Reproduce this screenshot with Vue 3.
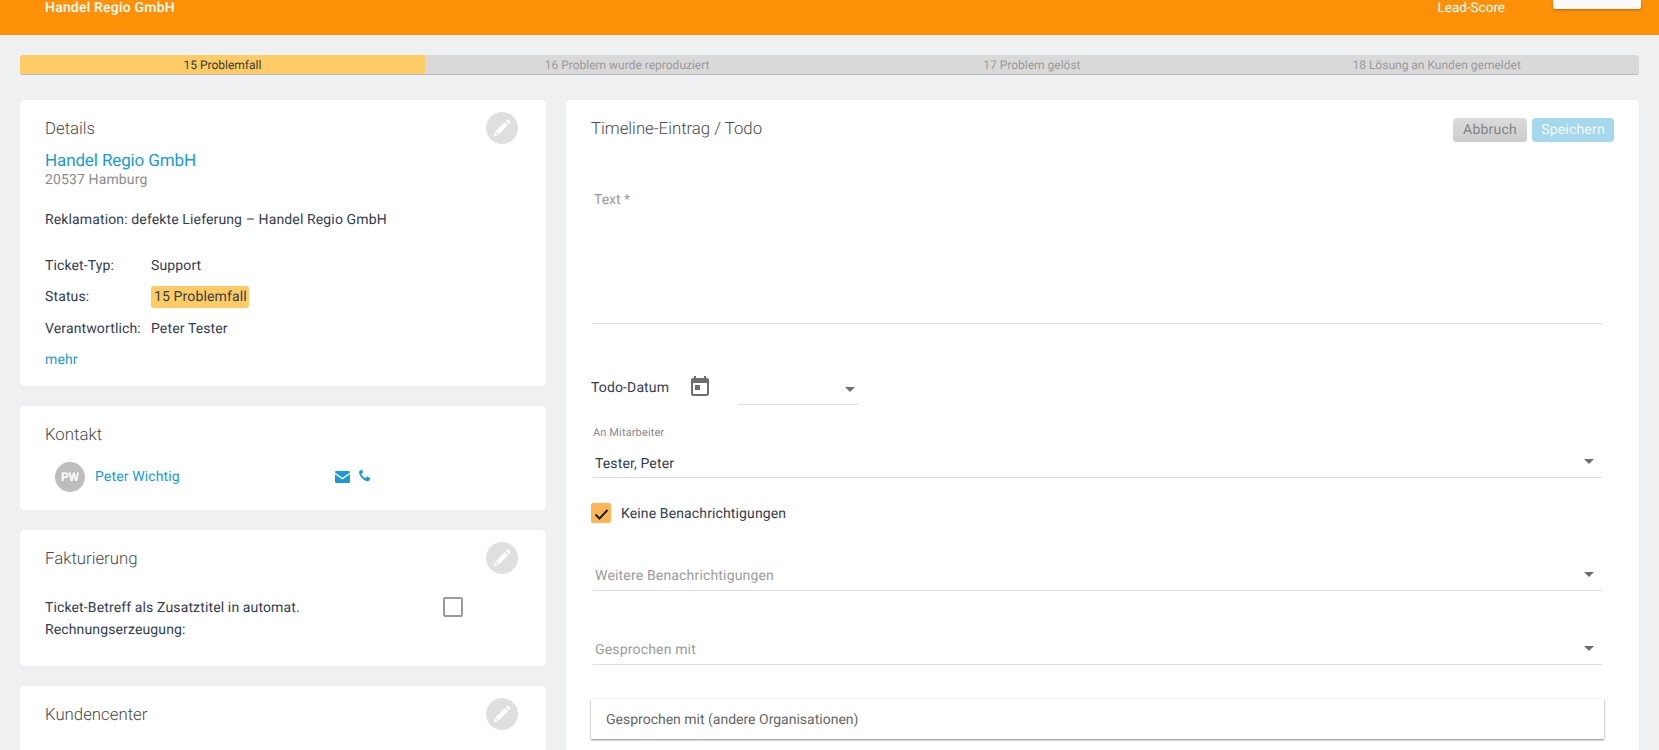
<script setup>
const steps = [
  { label: '15 Problemfall', active: true },
  { label: '16 Problem wurde reproduziert' },
  { label: '17 Problem gelöst' },
  { label: '18 Lösung an Kunden gemeldet' },
]
const details = [
  { key: 'Ticket-Typ:', value: 'Support' },
  { key: 'Status:', value: '15 Problemfall', badge: true },
  { key: 'Verantwortlich:', value: 'Peter Tester' },
]
</script>

<template>
  <div class="page">
    <header class="topbar">
      <span class="company">Handel Regio GmbH</span>
      <span class="score">Lead-Score</span>
      <span class="score-box"></span>
    </header>

    <div class="stepper">
      <div v-for="s in steps" :key="s.label" class="step" :class="{ active: s.active }">{{ s.label }}</div>
    </div>

    <main class="columns">
      <div class="left">
        <section class="card details">
          <div class="card-head">
            <h2>Details</h2>
            <button class="pen"><svg viewBox="0 0 24 24"><path d="M15 5.600l3.400 3.400L8.300 19.100l-3.400-3.400zM16 4.600l1.300-1.300a1.500 1.500 0 0 1 2.100 0l1.300 1.300a1.500 1.500 0 0 1 0 2.100l-1.300 1.300zM4.200 16.600l3.200 3.200-4.400 1.200z"/></svg></button>
          </div>
          <a class="org">Handel Regio GmbH</a>
          <div class="city">20537 Hamburg</div>
          <p class="subject">Reklamation: defekte Lieferung – Handel Regio GmbH</p>
          <div class="facts">
            <div v-for="d in details" :key="d.key" class="fact">
              <span class="fact-key">{{ d.key }}</span>
              <span :class="{ badge: d.badge }">{{ d.value }}</span>
            </div>
          </div>
          <a class="more">mehr</a>
        </section>

        <section class="card contact">
          <div class="card-head"><h2>Kontakt</h2></div>
          <div class="person">
            <span class="avatar">PW</span>
            <a class="person-name">Peter Wichtig</a>
            <svg class="ico-mail" viewBox="0 0 24 19"><path d="M0 2.400 12 10.700 24 2.400V2a2 2 0 0 0-2-2H2a2 2 0 0 0-2 2z"/><path d="M0 5V17a2 2 0 0 0 2 2h20a2 2 0 0 0 2-2V5L12 13.300z"/></svg>
            <svg class="ico-phone" viewBox="0 0 24 24"><path d="M6.600 1.500 3.400 3C1.800 3.800 1.600 6 2.300 8.400c1.800 6 7.300 11.800 13 13.600 2.600.7 4.700.3 5.500-1.300l1.500-3.100c.2-.5 0-1.100-.5-1.300l-4.300-2.300c-.5-.2-1-.1-1.300.3l-1.800 2.200c-.3.3-.7.400-1.100.2-2.900-1.300-5.500-4-6.800-6.900-.2-.4-.1-.8.2-1.100l2.100-1.800c.4-.3.500-.8.300-1.300L7.900 2c-.2-.5-.8-.7-1.300-.5z"/></svg>
          </div>
        </section>

        <section class="card billing">
          <div class="card-head">
            <h2>Fakturierung</h2>
            <button class="pen"><svg viewBox="0 0 24 24"><path d="M15 5.600l3.400 3.400L8.300 19.100l-3.400-3.400zM16 4.600l1.300-1.300a1.500 1.500 0 0 1 2.100 0l1.300 1.300a1.500 1.500 0 0 1 0 2.100l-1.300 1.300zM4.200 16.600l3.200 3.200-4.400 1.200z"/></svg></button>
          </div>
          <div class="billing-row">
            <span class="billing-text">Ticket-Betreff als Zusatztitel in automat. Rechnungserzeugung:</span>
            <span class="check-empty"></span>
          </div>
        </section>

        <section class="card center">
          <div class="card-head">
            <h2>Kundencenter</h2>
            <button class="pen"><svg viewBox="0 0 24 24"><path d="M15 5.600l3.400 3.400L8.300 19.100l-3.400-3.400zM16 4.600l1.300-1.300a1.500 1.500 0 0 1 2.100 0l1.300 1.300a1.500 1.500 0 0 1 0 2.100l-1.300 1.300zM4.200 16.600l3.200 3.200-4.400 1.200z"/></svg></button>
          </div>
        </section>
      </div>

      <section class="card editor">
        <div class="editor-head">
          <h2>Timeline-Eintrag / Todo</h2>
          <div class="actions">
            <button class="btn cancel">Abbruch</button>
            <button class="btn save">Speichern</button>
          </div>
        </div>

        <div class="textarea">Text *</div>

        <div class="todo-row">
          <span class="todo-label">Todo-Datum</span>
          <svg class="calendar" viewBox="0 0 18 20"><path d="M16 2h-1V0h-2v2H5V0H3v2H2C.9 2 0 2.900 0 4v14c0 1.100.9 2 2 2h14c1.100 0 2-.9 2-2V4c0-1.100-.9-2-2-2zm0 16H2V7h14v11zM4 9h5v5H4z"/></svg>
          <div class="date-select"><i class="arrow"></i></div>
        </div>

        <label class="mini-label">An Mitarbeiter</label>
        <div class="select value-select">Tester, Peter<i class="arrow"></i></div>

        <div class="check-row">
          <span class="check-on"><svg viewBox="0 0 20 20"><path d="M4.500 11.500 8.500 15.500 16.500 7" fill="none" stroke="#1f1f1f" stroke-width="2"/></svg></span>
          <span class="check-label">Keine Benachrichtigungen</span>
        </div>

        <div class="select placeholder first">Weitere Benachrichtigungen<i class="arrow"></i></div>
        <div class="select placeholder second">Gesprochen mit<i class="arrow"></i></div>

        <div class="expander">Gesprochen mit (andere Organisationen)</div>
      </section>
    </main>
  </div>
</template>

<style>
html, body { margin: 0; background: #eff0f2; }
</style>

<style scoped>
.page {
  height: 750px;
  overflow: hidden;
  background: #eff0f2;
  font-family: Roboto, "Liberation Sans", sans-serif;
  font-size: 14px;
  letter-spacing: .13px;
  color: #333d4e;
  text-rendering: geometricPrecision;
}
.topbar {
  height: 35px;
  background: #ff9108;
  display: flex;
  align-items: flex-start;
  padding: 0 18px 0 45px;
  box-sizing: border-box;
  color: #fff;
  line-height: 16px;
}
.company { font-weight: 500; flex: 1; letter-spacing: .2px; }
.score { font-weight: 400; font-size: 13.5px; letter-spacing: 0; }
.score-box {
  width: 88px;
  height: 9px;
  margin-left: 48px;
  background: #fafafa;
  border-radius: 0 0 2px 2px;
  box-shadow: 0 1px 3px rgba(0, 0, 0, .3);
}
.stepper {
  margin: 20px 20px 0;
  height: 20px;
  display: grid;
  grid-template-columns: repeat(4, 1fr);
  background: #d9d9d9;
  border-bottom: 1px solid #b9b9b9;
  box-sizing: border-box;
  border-radius: 3px;
  overflow: hidden;
}
.step {
  text-align: center;
  font-size: 12px;
  line-height: 20px;
  letter-spacing: 0;
  color: #9a9a9a;
}
.step.active {
  background: #fecb65;
  color: #3a3a3a;
  box-shadow: 0 1px 0 #d9b160;
}
.columns {
  display: grid;
  grid-template-columns: 526px 1073px;
  gap: 20px;
  padding: 25px 20px 0;
  align-items: start;
}
.left { display: flex; flex-direction: column; gap: 20px; }
.card {
  background: #fff;
  border-radius: 5px;
  box-sizing: border-box;
}
.left .card { padding: 12px 28px 0 25px; }
.card-head {
  display: flex;
  justify-content: space-between;
  align-items: center;
  height: 32px;
}
h2 {
  margin: 0;
  padding-top: 2px;
  font-size: 16.8px;
  font-weight: 300;
  letter-spacing: 0;
  color: #4a4a4a;
}
.pen {
  width: 32px;
  height: 32px;
  border: 0;
  padding: 5px;
  border-radius: 50%;
  background: #dfdfdf;
}
.pen svg { display: block; width: 22px; height: 22px; fill: #fff; }
a { color: #1a9ad6; }
.org {
  display: block;
  margin-top: 7px;
  font-size: 17px;
  font-weight: 400;
  line-height: 20px;
  letter-spacing: -.12px;
}
.city { color: #8c8c8c; line-height: 18px; }
.subject { margin: 21px 0 0; line-height: 20px; }
.facts { margin-top: 20px; }
.fact { display: flex; height: 31.5px; align-items: center; }
.fact-key { width: 106px; }
.badge {
  background: #fecb65;
  border-radius: 3px;
  line-height: 22px;
  padding: 0 2.5px 0 3px;
}
.more { display: block; line-height: 30px; padding-bottom: 11.5px; }
.person {
  display: flex;
  align-items: center;
  height: 30px;
  margin: 12px 0 18px 10px;
}
.avatar {
  width: 30px;
  height: 30px;
  line-height: 30px;
  border-radius: 50%;
  background: #bdbdbd;
  color: #fff;
  font-size: 12px;
  font-weight: 700;
  letter-spacing: 0;
  text-align: center;
  margin-right: 10px;
}
.person-name { width: 240px; }
.ico-mail { width: 15px; height: 12px; fill: #1a9ad6; margin-top: -1px; }
.ico-phone { width: 13px; height: 13px; fill: #1a9ad6; margin: -3px 0 0 8px; }
.billing-row {
  display: grid;
  grid-template-columns: 300px 20px;
  column-gap: 98px;
  margin-top: 23px;
  padding-bottom: 25px;
  line-height: 22px;
}
.check-empty {
  width: 20px;
  height: 20px;
  box-sizing: border-box;
  border: 2px solid #9a9a9a;
  border-radius: 2px;
}
.center { height: 120px; }
.editor {
  height: 700px;
  padding: 18px 35px 0 25px;
}
.editor-head {
  display: flex;
  justify-content: space-between;
  margin-right: -10px;
}
.editor-head h2 { line-height: 20px; padding-top: 1px; }
.actions { display: flex; gap: 5px; }
.btn {
  height: 24px;
  border: 0;
  border-radius: 4px;
  font-family: inherit;
  font-size: 14px;
  letter-spacing: .2px;
  padding: 0;
  text-rendering: geometricPrecision;
}
.cancel {
  width: 74px;
  background: linear-gradient(#dcdcdc, #cbcbcb);
  color: #858585;
}
.save { width: 82px; background: #a5d8ec; color: #f3fbfe; }
.textarea {
  margin: 47px 2px 0;
  height: 135px;
  box-sizing: border-box;
  padding: 1px 0 0 1px;
  line-height: 20px;
  letter-spacing: 0;
  color: #9b9b9b;
  border-bottom: 1px solid #dedede;
}
.todo-row {
  display: flex;
  align-items: flex-start;
  margin-top: 51px;
  height: 30px;
  line-height: 24px;
}
.todo-label { width: 100px; padding-top: 1px; }
.calendar { width: 18px; height: 20px; fill: #6e6e6e; margin-top: 1px; }
.date-select {
  position: relative;
  width: 120px;
  height: 30px;
  margin-left: 29px;
  box-sizing: border-box;
  border-bottom: 1px solid #dedede;
}
.arrow {
  position: absolute;
  right: 3px;
  top: 12px;
  width: 0;
  height: 0;
  border-style: solid;
  border-width: 5px 5px 0;
  border-color: #6e6e6e transparent transparent;
}
.mini-label {
  display: block;
  margin: 21px 0 -1px 2px;
  font-size: 11px;
  line-height: 14px;
  color: #8a8a8a;
}
.select {
  position: relative;
  margin: 0 2px;
  padding-left: 2px;
  box-sizing: border-box;
  border-bottom: 1px solid #dedede;
}
.select .arrow { right: 8px; top: 11px; }
.value-select { height: 39px; line-height: 50px; }
.value-select .arrow { top: 20px; }
.check-row {
  display: flex;
  align-items: center;
  gap: 10px;
  margin-top: 25px;
  height: 20px;
}
.check-label { padding-top: 2px; }
.check-on {
  width: 20px;
  height: 20px;
  background: #ffb455;
  border-radius: 2px;
}
.check-on svg { display: block; }
.placeholder { height: 30px; line-height: 30px; letter-spacing: .17px; color: #9b9b9b; }
.first { margin-top: 38px; }
.second { margin-top: 44px; }
.expander {
  margin-top: 34px;
  height: 40px;
  line-height: 42px;
  padding-left: 15px;
  letter-spacing: 0;
  color: #666;
  box-shadow: 0 1px 2px rgba(0, 0, 0, .45), 0 0 2px rgba(0, 0, 0, .08);
}
</style>
